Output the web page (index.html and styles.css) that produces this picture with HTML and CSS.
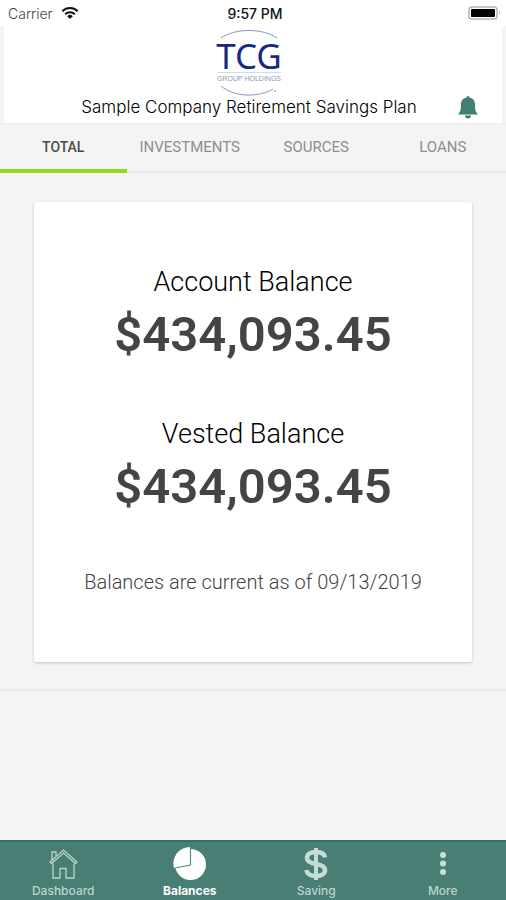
FILE: index.html
```html
<!DOCTYPE html>
<html lang="en">
<head>
<meta charset="utf-8">
<meta name="viewport" content="width=device-width, initial-scale=1">
<title>Balances</title>
<link rel="stylesheet" href="styles.css">
</head>
<body>
<div class="status">
  <div class="carrier">Carrier
    <svg width="18" height="14" viewBox="0 0 18 14" fill="none" stroke="#111" stroke-width="2"><path d="M1.3 5.2a11 11 0 0 1 15.4 0M4.2 8.2a7 7 0 0 1 9.6 0"/><path d="M9 13 6.2 10.2a4 4 0 0 1 5.6 0z" fill="#111" stroke="none"/></svg>
  </div>
  <div class="time">9:57 PM</div>
  <svg class="battery" width="34" height="14" viewBox="0 0 34 14"><rect x="1" y="1" width="28" height="12" rx="3" fill="#fff" stroke="#b5b5b5" stroke-width="1.5"/><rect x="3" y="3" width="24" height="8" rx="1" fill="#000"/><path d="M31 5q2 2 0 4z" fill="#aaa"/></svg>
</div>
<header class="header">
  <svg class="logo" width="72" height="68" viewBox="0 0 72 68" role="img" aria-label="TCG Group Holdings">
    <g fill="none" stroke="#8696bb"><path d="M8 9C22-1 50-1 64 9M8 57C21 68 45 69 60 60"/><path d="M4 43.500H68" stroke="#d3dbe9"/></g>
    <circle cx="62" cy="62" r="1" fill="#9aa8c6"/>
    <text class="logo-name" x="36" y="40" text-anchor="middle">TCG</text>
    <text class="logo-sub" x="36" y="52" text-anchor="middle">GROUP HOLDINGS</text>
  </svg>
  <div class="plan-row">
    <h1 class="plan">Sample Company Retirement Savings Plan</h1>
    <button class="bell" type="button" aria-label="Notifications"><svg width="20" height="24" viewBox="0 0 20 24" fill="#3f8073"><path d="M8.500 2.500a1.500 1.500 0 0 1 3 0C15.500 3.400 17 6 17 9.500c0 5 .4 7 2.500 9v1H.5v-1c2.100-2 2.500-4 2.500-9C3 6 4.500 3.400 8.500 2.500zM7 20.500h6a3 3 0 0 1-6 0z"/></svg></button>
  </div>
</header>
<nav class="tabs" aria-label="Balance views">
  <a class="tab tab-active" href="#total" aria-current="page">TOTAL</a>
  <a class="tab" href="#investments">INVESTMENTS</a>
  <a class="tab" href="#sources">SOURCES</a>
  <a class="tab" href="#loans">LOANS</a>
</nav>
<main class="main">
  <section class="card">
    <div class="balance"><h2 class="label">Account Balance</h2><p class="amount">$434,093.45</p></div>
    <div class="balance"><h2 class="label">Vested Balance</h2><p class="amount">$434,093.45</p></div>
    <p class="note">Balances are current as of 09/13/2019</p>
  </section>
</main>
<nav class="bottom" aria-label="Main">
  <a class="item" href="#dashboard">
    <svg width="32" height="34" viewBox="0 0 32 34" fill="none" stroke="#bdd4ce" stroke-width="1.300"><path d="M6 16.500V31h7V21.500h6V31h8V16.500"/><path d="M3 15 16.500 3 30 15l-1.500 1.500L16.500 6 4.500 16.500z"/><path d="M5 13V5h4v4"/></svg>
    <span>Dashboard</span>
  </a>
  <a class="item item-active" href="#balances" aria-current="page">
    <svg width="34" height="34" viewBox="0 0 34 34"><circle cx="17.500" cy="17.500" r="15.500" fill="#fff"/><path d="M17 17V0A16.500 16.500 0 0 0 1 21z" fill="#fff"/><path d="M17.500 0V18L2 21" fill="none" stroke="#61877e" stroke-width="1.200"/></svg>
    <span>Balances</span>
  </a>
  <a class="item" href="#saving">
    <svg width="32" height="34" viewBox="0 0 32 34" fill="none" stroke="#c6dcd7"><path d="M25 10.500C24.500 6.500 21 5 16 5S7 7 7 11s4 5.200 9 6 9 2 9 6-4 6-9 6-9-2-9.500-6" stroke-width="4.500"/><path d="M16 1V33" stroke-width="4"/></svg>
    <span>Saving</span>
  </a>
  <a class="item" href="#more">
    <svg width="32" height="34" viewBox="0 0 32 34" fill="#c9ded9"><circle cx="16" cy="8" r="3"/><circle cx="16" cy="16.500" r="3"/><circle cx="16" cy="25" r="3"/></svg>
    <span>More</span>
  </a>
</nav>
</body>
</html>
```
FILE: styles.css
```css
* { box-sizing: border-box; }
body {
  margin: 0;
  min-height: 100vh;
  display: flex;
  flex-direction: column;
  background: #f4f4f4;
  font-family: Roboto, "Liberation Sans", sans-serif;
  color: #212121;
}
h1, h2, p { margin: 0; font-weight: 400; }
a { text-decoration: none; }
.status {
  display: grid;
  grid-template-columns: 1fr auto 1fr;
  align-items: center;
  height: 26px;
  padding: 0 4px 0 8px;
  background: #fff;
  font-family: Inter, sans-serif;
  font-size: 14px;
}
.carrier { display: flex; align-items: center; gap: 8px; font-weight: 300; color: #444; }
.time { font-weight: 500; color: #111; }
.battery { justify-self: end; }
.header {
  margin: 0 4px;
  background: #fff;
  display: flex;
  flex-direction: column;
  height: 97px;
  padding-top: 3px;
}
.logo { align-self: center; margin-right: 8px; }
.logo-name { font: 35px "Noto Sans", sans-serif; fill: #17297f; }
.logo-sub { font: 7px "Liberation Sans", sans-serif; fill: #8a97b6; }
.plan-row {
  display: grid;
  grid-template-columns: 1fr auto 1fr;
  align-items: center;
  height: 20px;
  padding: 0 24px 0 16px;
  margin-top: -2px;
}
.plan { grid-column: 2; font: 300 17px/20px Inter, sans-serif; color: #000; white-space: nowrap; }
.bell { justify-self: end; display: flex; padding: 0; border: 0; background: none; }
.tabs {
  display: grid;
  grid-template-columns: repeat(4, 1fr);
  height: 50px;
  border-top: 1px solid #ececec;
  box-shadow: inset 0 -2px #e6e6e6;
}
.tab {
  display: flex;
  align-items: center;
  justify-content: center;
  border-bottom: 4px solid transparent;
  font-size: 15px;
  color: #8e8e8e;
}
.tab-active { font-size: 14px; font-weight: 500; color: #4c4c4c; border-color: #98d520; }
.main { padding: 29px 34px 27px; border-bottom: 2px solid #e8e8e8; }
.card {
  display: flex;
  flex-direction: column;
  gap: 46px;
  padding: 60px 16px 64px;
  background: #fff;
  border-radius: 2px;
  box-shadow: 0 1px 3px #00000033;
  text-align: center;
}
.label { font-size: 27px; line-height: 40px; font-weight: 300; color: #000; }
.amount { font-size: 49px; line-height: 66px; font-weight: 600; color: #444; }
.note { font-size: 20px; line-height: 32px; font-weight: 300; color: #444; }
.bottom {
  display: grid;
  grid-template-columns: repeat(4, 1fr);
  height: 60px;
  margin-top: auto;
  border-top: 2px solid #347366;
  background: #497e75;
}
.item {
  display: flex;
  flex-direction: column;
  align-items: center;
  gap: 3px;
  padding-top: 5px;
  font: 500 12px/14px Inter, sans-serif;
  color: #bdd4ce;
}
.item-active { color: #fff; font-weight: 700; }
```
